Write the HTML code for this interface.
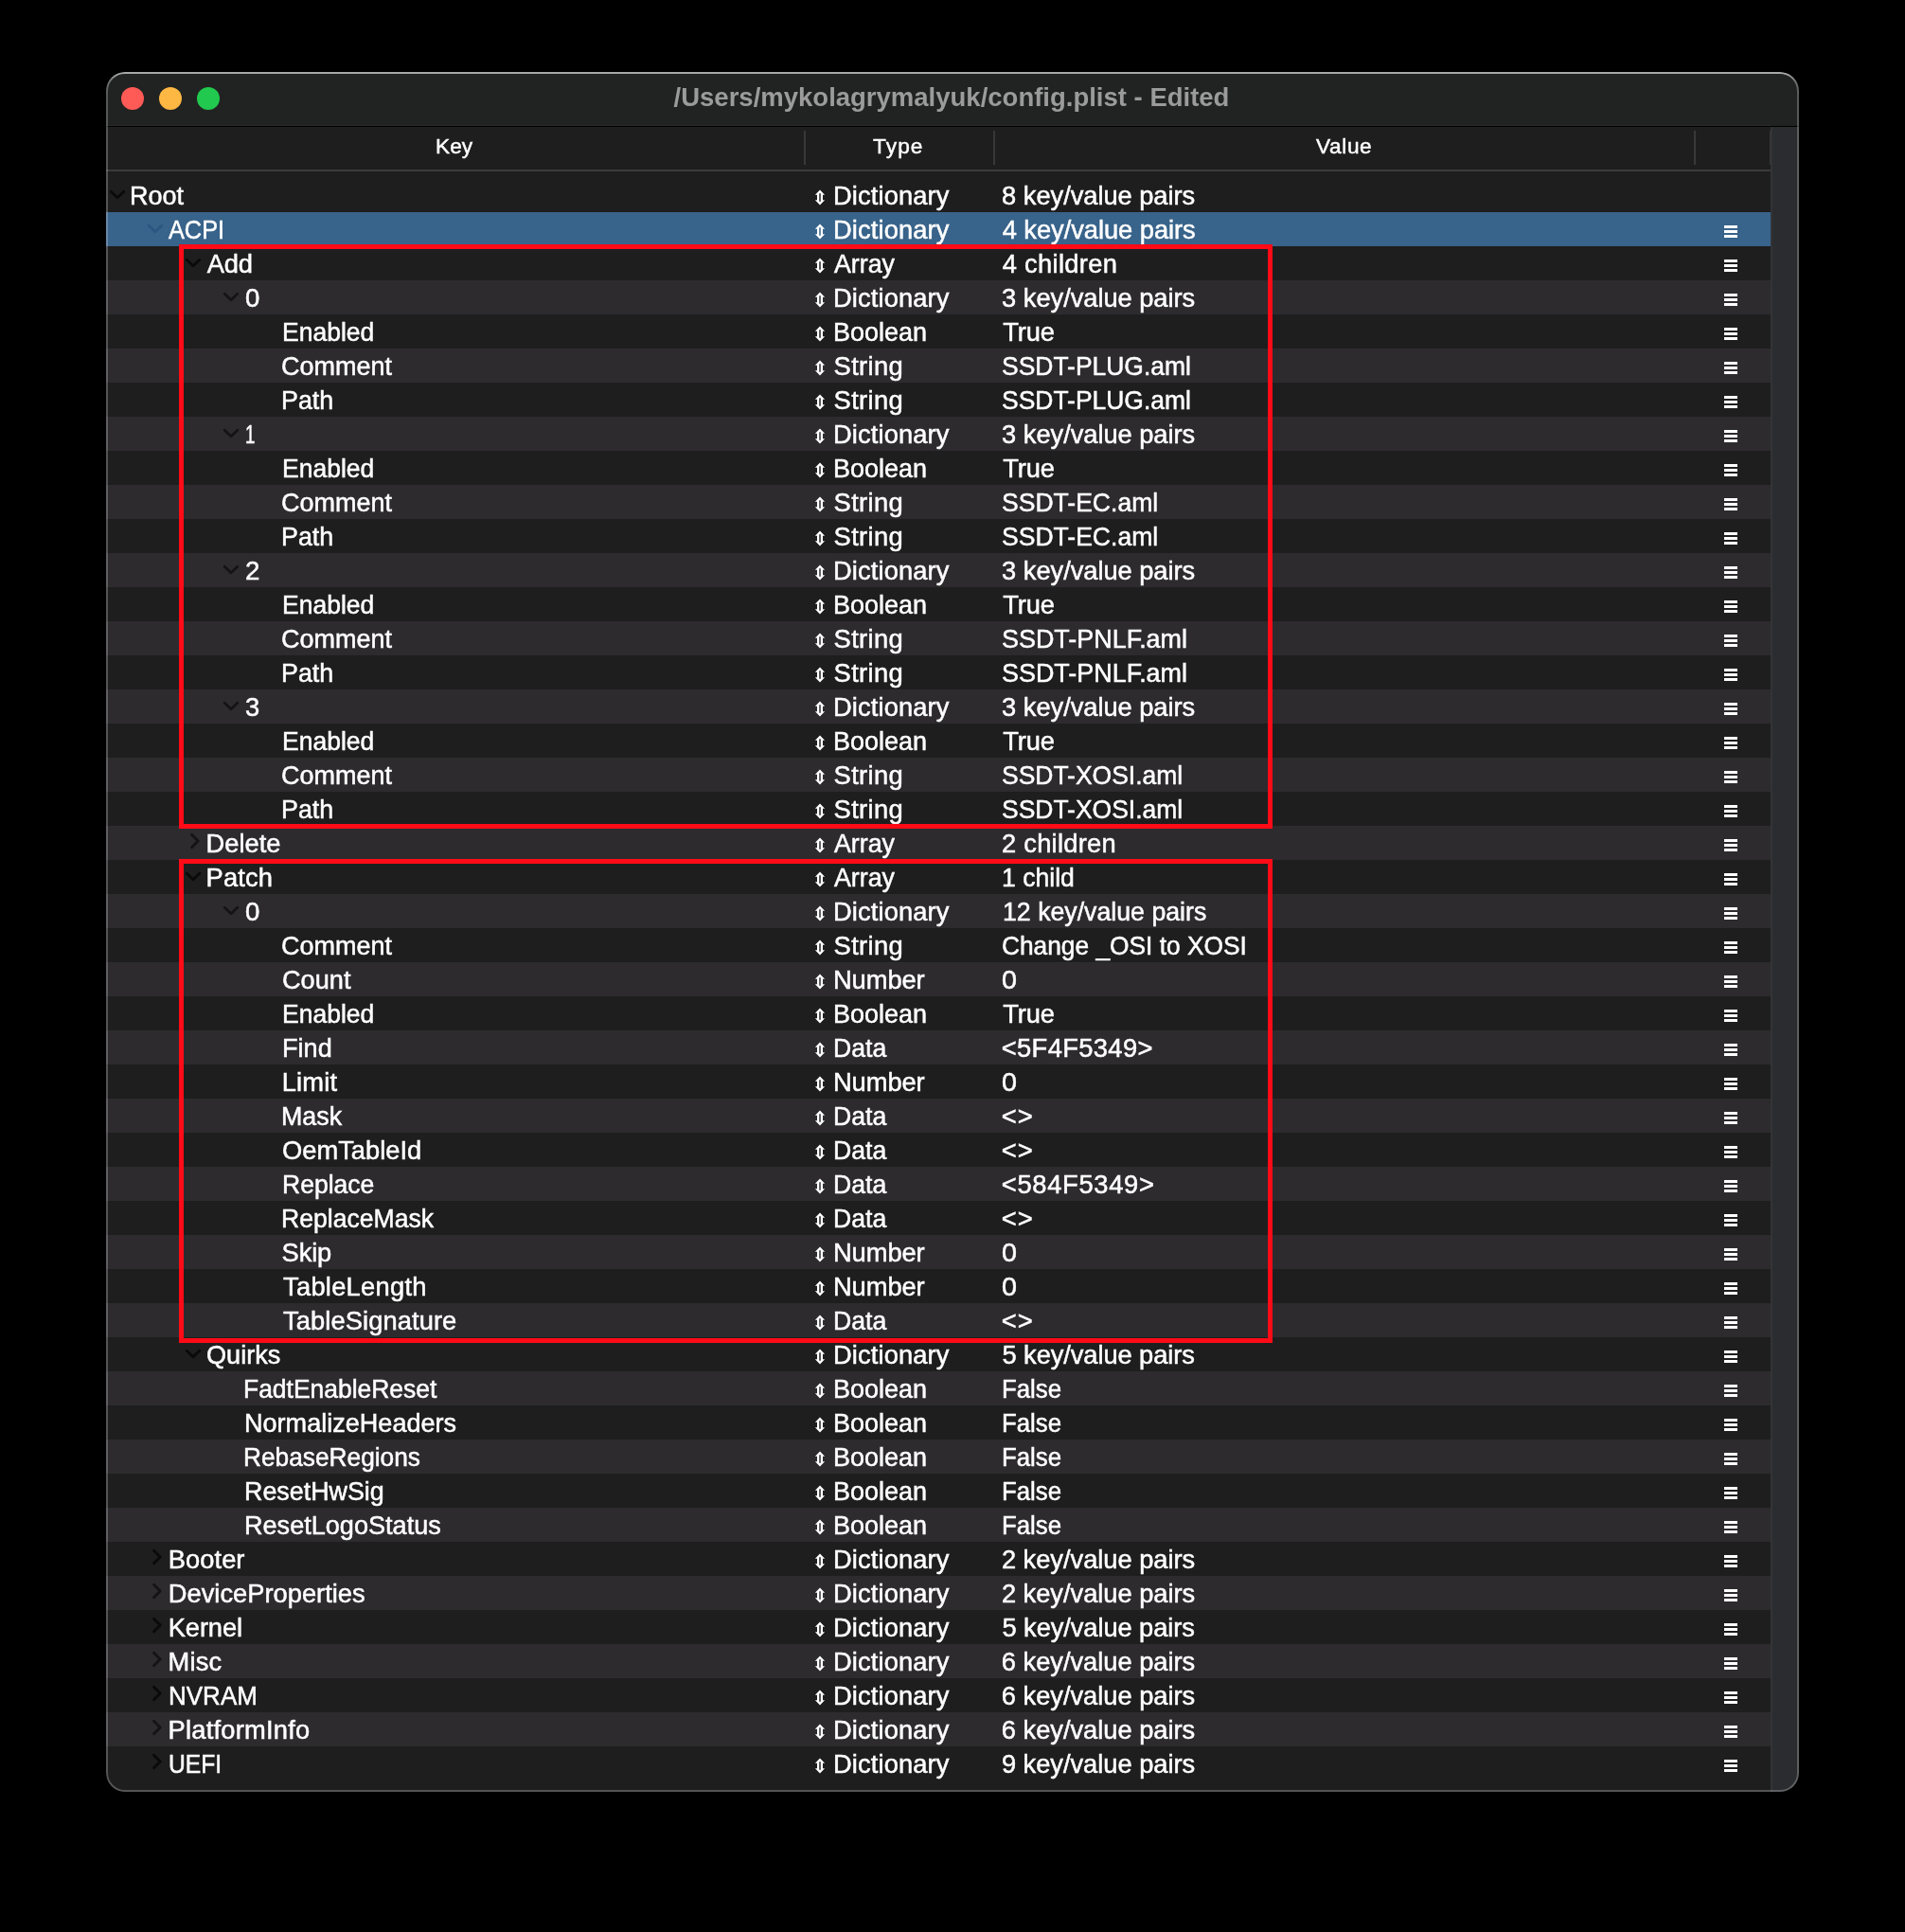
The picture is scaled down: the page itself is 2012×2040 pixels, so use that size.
<!DOCTYPE html>
<html><head><meta charset="utf-8"><title>config.plist</title>
<style>
html,body{margin:0;padding:0;background:#000;}
body{width:2012px;height:2040px;position:relative;overflow:hidden;
 font-family:"Liberation Sans",sans-serif;color:#fff;}
#win{position:absolute;left:112px;top:76px;width:1788px;height:1816px;
 border-radius:20px;background:#1e1e1e;overflow:hidden;will-change:transform;}
#tb{position:absolute;left:0;top:0;width:1788px;height:57px;background:#212322;}
#tb2{position:absolute;left:0;top:56px;width:1758px;height:1px;background:#2b2c2b;}
#tbl{position:absolute;left:0;top:57px;width:1788px;height:1px;background:#000;}
.tl{position:absolute;top:16px;width:24px;height:24px;border-radius:12px;}
#title{position:absolute;left:1px;top:0;width:1784px;height:56px;line-height:53px;text-align:center;
 font-weight:bold;font-size:27.5px;color:#9b9b9b;white-space:nowrap;}
#hdr{position:absolute;left:0;top:58px;width:1758px;height:45px;background:#1e1e1e;}
#hdrl{position:absolute;left:0;top:103px;width:1758px;height:2px;background:#3b3b3b;}
.hs{position:absolute;top:62px;width:2px;height:36px;background:#383838;}
.ht{position:absolute;top:58px;height:45px;line-height:41px;font-size:22.7px;color:#fff;white-space:nowrap;-webkit-text-stroke:0.45px #fff;}
#sb{position:absolute;left:1758px;top:58px;width:30px;height:1760px;background:#2b2c2f;box-sizing:border-box;border-left:2px solid #333437;}
#rows{position:absolute;left:0;top:112px;width:1758px;}
.r{position:absolute;left:0;width:1758px;height:36px;line-height:36px;font-size:27.3px;white-space:nowrap;-webkit-text-stroke:0.5px #fff;}
.r.o{background:#2d2b2e;}
.r.s{background:#38638a;}
.r span{position:absolute;top:1px;height:36px;}
.k{}
.t{left:770px;}
.v{left:946px;}
.ar{position:absolute;left:748px;top:12px;width:12px;height:17px;}
.cd{position:absolute;top:12px;width:18px;height:11px;}
.cr{position:absolute;top:7px;width:12px;height:18px;}
.m{position:absolute;left:1709px;top:14px;width:14px;height:13px;
 background:linear-gradient(#fff 0 3px,transparent 3px 5px,#fff 5px 8px,transparent 8px 10px,#fff 10px 13px);}
.rb{position:absolute;border:5px solid #fe0b17;box-sizing:border-box;}
#edge{position:absolute;left:0;top:0;width:1788px;height:1816px;pointer-events:none;}
</style></head>
<body>
<svg width="0" height="0" style="position:absolute"><defs><symbol id="ar" viewBox="0 0 12 17"><path fill="#fff" fill-rule="evenodd" d="M6 0.5 L11.1 5.7 L9 5.7 L9 11.3 L11.1 11.3 L6 16.5 L0.9 11.3 L3 11.3 L3 5.7 L0.9 5.7 Z M5.25 4.3 L5.25 12.7 L6.75 12.7 L6.75 4.3 Z"/></symbol><symbol id="cd" viewBox="0 0 18 11"><path fill="none" stroke="currentColor" stroke-width="2.8" stroke-linecap="round" stroke-linejoin="round" d="M2.2 2.2 L9 8.8 L15.8 2.2"/></symbol><symbol id="cr" viewBox="0 0 12 18"><path fill="none" stroke="currentColor" stroke-width="2.8" stroke-linecap="round" stroke-linejoin="round" d="M2.5 2.2 L9.2 9 L2.5 15.8"/></symbol></defs></svg>
<div id="win">
<div id="tb"></div><div id="tb2"></div><div id="tbl"></div>
<div class="tl" style="left:16px;background:#fe5a56"></div><div class="tl" style="left:56px;background:#fdb843"></div><div class="tl" style="left:96px;background:#21c94f"></div>
<div id="title">/Users/mykolagrymalyuk/config.plist - Edited</div>
<div id="hdr"></div><div id="hdrl"></div>
<div class="hs" style="left:737px"></div><div class="hs" style="left:937px"></div><div class="hs" style="left:1677px"></div><div class="hs" style="left:1757px;width:1px"></div>
<div class="ht" style="left:348px;letter-spacing:0px">Key</div><div class="ht" style="left:810px;letter-spacing:1.1px">Type</div><div class="ht" style="left:1278px;letter-spacing:0.6px">Value</div>
<div id="sb"></div>
<div id="rows">
<div class="r" style="top:0px"><svg class="cd" style="left:3px;color:#0a0a0a"><use href="#cd"/></svg><span class="k" style="left:25.32px;transform:scaleX(0.9905);transform-origin:0 0;">Root</span><svg class="ar"><use href="#ar"/></svg><span class="t" style="left:767.95px;letter-spacing:0.133px;">Dictionary</span><span class="v" style="left:946.11px;letter-spacing:-0.045px;">8 key/value pairs</span></div>
<div class="r s" style="top:36px"><svg class="cd" style="left:43px;color:#2a5680"><use href="#cd"/></svg><span class="k" style="left:66.29px;transform:scaleX(0.9264);transform-origin:0 0;">ACPI</span><svg class="ar"><use href="#ar"/></svg><span class="t" style="left:767.95px;letter-spacing:0.133px;">Dictionary</span><span class="v" style="left:946.64px;letter-spacing:-0.046px;">4 key/value pairs</span><i class="m"></i></div>
<div class="r" style="top:72px"><svg class="cd" style="left:83px;color:#0a0a0a"><use href="#cd"/></svg><span class="k" style="left:106.67px;letter-spacing:-0.098px;">Add</span><svg class="ar"><use href="#ar"/></svg><span class="t" style="left:769.36px;transform:scaleX(0.9800);transform-origin:0 0;">Array</span><span class="v" style="left:946.64px;letter-spacing:0.332px;">4 children</span><i class="m"></i></div>
<div class="r o" style="top:108px"><svg class="cd" style="left:123px;color:#141315"><use href="#cd"/></svg><span class="k" style="left:147.06px;transform:scaleX(1.0119);transform-origin:0 0;">0</span><svg class="ar"><use href="#ar"/></svg><span class="t" style="left:767.95px;letter-spacing:0.133px;">Dictionary</span><span class="v" style="left:946.11px;letter-spacing:-0.045px;">3 key/value pairs</span><i class="m"></i></div>
<div class="r" style="top:144px"><span class="k" style="left:185.51px;transform:scaleX(0.9719);transform-origin:0 0;">Enabled</span><svg class="ar"><use href="#ar"/></svg><span class="t" style="left:768.31px;transform:scaleX(0.9877);transform-origin:0 0;">Boolean</span><span class="v" style="left:947.23px;letter-spacing:-0.105px;">True</span><i class="m"></i></div>
<div class="r o" style="top:180px"><span class="k" style="left:185.31px;transform:scaleX(0.9885);transform-origin:0 0;">Comment</span><svg class="ar"><use href="#ar"/></svg><span class="t" style="left:768.58px;letter-spacing:0.349px;">String</span><span class="v" style="left:945.77px;transform:scaleX(0.9690);transform-origin:0 0;">SSDT-PLUG.aml</span><i class="m"></i></div>
<div class="r" style="top:216px"><span class="k" style="left:185.43px;transform:scaleX(0.9833);transform-origin:0 0;">Path</span><svg class="ar"><use href="#ar"/></svg><span class="t" style="left:768.58px;letter-spacing:0.349px;">String</span><span class="v" style="left:945.77px;transform:scaleX(0.9690);transform-origin:0 0;">SSDT-PLUG.aml</span><i class="m"></i></div>
<div class="r o" style="top:252px"><svg class="cd" style="left:123px;color:#141315"><use href="#cd"/></svg><span class="k" style="left:146.61px;transform:scaleX(0.6877);transform-origin:0 0;">1</span><svg class="ar"><use href="#ar"/></svg><span class="t" style="left:767.95px;letter-spacing:0.133px;">Dictionary</span><span class="v" style="left:946.11px;letter-spacing:-0.045px;">3 key/value pairs</span><i class="m"></i></div>
<div class="r" style="top:288px"><span class="k" style="left:185.51px;transform:scaleX(0.9719);transform-origin:0 0;">Enabled</span><svg class="ar"><use href="#ar"/></svg><span class="t" style="left:768.31px;transform:scaleX(0.9877);transform-origin:0 0;">Boolean</span><span class="v" style="left:947.23px;letter-spacing:-0.105px;">True</span><i class="m"></i></div>
<div class="r o" style="top:324px"><span class="k" style="left:185.31px;transform:scaleX(0.9885);transform-origin:0 0;">Comment</span><svg class="ar"><use href="#ar"/></svg><span class="t" style="left:768.58px;letter-spacing:0.349px;">String</span><span class="v" style="left:945.77px;transform:scaleX(0.9722);transform-origin:0 0;">SSDT-EC.aml</span><i class="m"></i></div>
<div class="r" style="top:360px"><span class="k" style="left:185.43px;transform:scaleX(0.9833);transform-origin:0 0;">Path</span><svg class="ar"><use href="#ar"/></svg><span class="t" style="left:768.58px;letter-spacing:0.349px;">String</span><span class="v" style="left:945.77px;transform:scaleX(0.9722);transform-origin:0 0;">SSDT-EC.aml</span><i class="m"></i></div>
<div class="r o" style="top:396px"><svg class="cd" style="left:123px;color:#141315"><use href="#cd"/></svg><span class="k" style="left:146.69px;transform:scaleX(1.0143);transform-origin:0 0;">2</span><svg class="ar"><use href="#ar"/></svg><span class="t" style="left:767.95px;letter-spacing:0.133px;">Dictionary</span><span class="v" style="left:946.11px;letter-spacing:-0.045px;">3 key/value pairs</span><i class="m"></i></div>
<div class="r" style="top:432px"><span class="k" style="left:185.51px;transform:scaleX(0.9719);transform-origin:0 0;">Enabled</span><svg class="ar"><use href="#ar"/></svg><span class="t" style="left:768.31px;transform:scaleX(0.9877);transform-origin:0 0;">Boolean</span><span class="v" style="left:947.23px;letter-spacing:-0.105px;">True</span><i class="m"></i></div>
<div class="r o" style="top:468px"><span class="k" style="left:185.31px;transform:scaleX(0.9885);transform-origin:0 0;">Comment</span><svg class="ar"><use href="#ar"/></svg><span class="t" style="left:768.58px;letter-spacing:0.349px;">String</span><span class="v" style="left:945.77px;transform:scaleX(0.9864);transform-origin:0 0;">SSDT-PNLF.aml</span><i class="m"></i></div>
<div class="r" style="top:504px"><span class="k" style="left:185.43px;transform:scaleX(0.9833);transform-origin:0 0;">Path</span><svg class="ar"><use href="#ar"/></svg><span class="t" style="left:768.58px;letter-spacing:0.349px;">String</span><span class="v" style="left:945.77px;transform:scaleX(0.9864);transform-origin:0 0;">SSDT-PNLF.aml</span><i class="m"></i></div>
<div class="r o" style="top:540px"><svg class="cd" style="left:123px;color:#141315"><use href="#cd"/></svg><span class="k" style="left:146.53px;transform:scaleX(1.0022);transform-origin:0 0;">3</span><svg class="ar"><use href="#ar"/></svg><span class="t" style="left:767.95px;letter-spacing:0.133px;">Dictionary</span><span class="v" style="left:946.11px;letter-spacing:-0.045px;">3 key/value pairs</span><i class="m"></i></div>
<div class="r" style="top:576px"><span class="k" style="left:185.51px;transform:scaleX(0.9719);transform-origin:0 0;">Enabled</span><svg class="ar"><use href="#ar"/></svg><span class="t" style="left:768.31px;transform:scaleX(0.9877);transform-origin:0 0;">Boolean</span><span class="v" style="left:947.23px;letter-spacing:-0.105px;">True</span><i class="m"></i></div>
<div class="r o" style="top:612px"><span class="k" style="left:185.31px;transform:scaleX(0.9885);transform-origin:0 0;">Comment</span><svg class="ar"><use href="#ar"/></svg><span class="t" style="left:768.58px;letter-spacing:0.349px;">String</span><span class="v" style="left:945.77px;transform:scaleX(0.9694);transform-origin:0 0;">SSDT-XOSI.aml</span><i class="m"></i></div>
<div class="r" style="top:648px"><span class="k" style="left:185.43px;transform:scaleX(0.9833);transform-origin:0 0;">Path</span><svg class="ar"><use href="#ar"/></svg><span class="t" style="left:768.58px;letter-spacing:0.349px;">String</span><span class="v" style="left:945.77px;transform:scaleX(0.9694);transform-origin:0 0;">SSDT-XOSI.aml</span><i class="m"></i></div>
<div class="r o" style="top:684px"><svg class="cr" style="left:88px;color:#141315"><use href="#cr"/></svg><span class="k" style="left:105.52px;letter-spacing:0.020px;">Delete</span><svg class="ar"><use href="#ar"/></svg><span class="t" style="left:769.36px;transform:scaleX(0.9800);transform-origin:0 0;">Array</span><span class="v" style="left:945.97px;letter-spacing:0.260px;">2 children</span><i class="m"></i></div>
<div class="r" style="top:720px"><svg class="cd" style="left:83px;color:#0a0a0a"><use href="#cd"/></svg><span class="k" style="left:105.52px;letter-spacing:0.178px;">Patch</span><svg class="ar"><use href="#ar"/></svg><span class="t" style="left:769.36px;transform:scaleX(0.9800);transform-origin:0 0;">Array</span><span class="v" style="left:945.72px;transform:scaleX(0.9740);transform-origin:0 0;">1 child</span><i class="m"></i></div>
<div class="r o" style="top:756px"><svg class="cd" style="left:123px;color:#141315"><use href="#cd"/></svg><span class="k" style="left:147.06px;transform:scaleX(1.0119);transform-origin:0 0;">0</span><svg class="ar"><use href="#ar"/></svg><span class="t" style="left:767.95px;letter-spacing:0.133px;">Dictionary</span><span class="v" style="left:946.59px;transform:scaleX(0.9785);transform-origin:0 0;">12 key/value pairs</span><i class="m"></i></div>
<div class="r" style="top:792px"><span class="k" style="left:185.31px;transform:scaleX(0.9885);transform-origin:0 0;">Comment</span><svg class="ar"><use href="#ar"/></svg><span class="t" style="left:768.58px;letter-spacing:0.349px;">String</span><span class="v" style="left:946.34px;transform:scaleX(0.9634);transform-origin:0 0;">Change _OSI to XOSI</span><i class="m"></i></div>
<div class="r o" style="top:828px"><span class="k" style="left:186.22px;transform:scaleX(0.9955);transform-origin:0 0;">Count</span><svg class="ar"><use href="#ar"/></svg><span class="t" style="left:767.96px;letter-spacing:-0.065px;">Number</span><span class="v" style="left:946.08px;transform:scaleX(1.0532);transform-origin:0 0;">0</span><i class="m"></i></div>
<div class="r" style="top:864px"><span class="k" style="left:185.51px;transform:scaleX(0.9719);transform-origin:0 0;">Enabled</span><svg class="ar"><use href="#ar"/></svg><span class="t" style="left:768.31px;transform:scaleX(0.9877);transform-origin:0 0;">Boolean</span><span class="v" style="left:947.23px;letter-spacing:-0.105px;">True</span><i class="m"></i></div>
<div class="r o" style="top:900px"><span class="k" style="left:185.56px;transform:scaleX(0.9923);transform-origin:0 0;">Find</span><svg class="ar"><use href="#ar"/></svg><span class="t" style="left:768.40px;transform:scaleX(0.9756);transform-origin:0 0;">Data</span><span class="v" style="left:945.78px;letter-spacing:0.366px;">&lt;5F4F5349&gt;</span><i class="m"></i></div>
<div class="r" style="top:936px"><span class="k" style="left:185.77px;letter-spacing:0.173px;">Limit</span><svg class="ar"><use href="#ar"/></svg><span class="t" style="left:767.96px;letter-spacing:-0.065px;">Number</span><span class="v" style="left:946.08px;transform:scaleX(1.0532);transform-origin:0 0;">0</span><i class="m"></i></div>
<div class="r o" style="top:972px"><span class="k" style="left:185.46px;transform:scaleX(0.9836);transform-origin:0 0;">Mask</span><svg class="ar"><use href="#ar"/></svg><span class="t" style="left:768.40px;transform:scaleX(0.9756);transform-origin:0 0;">Data</span><span class="v" style="left:945.78px;letter-spacing:0.960px;">&lt;&gt;</span><i class="m"></i></div>
<div class="r" style="top:1008px"><span class="k" style="left:185.95px;letter-spacing:0.013px;">OemTableId</span><svg class="ar"><use href="#ar"/></svg><span class="t" style="left:768.40px;transform:scaleX(0.9756);transform-origin:0 0;">Data</span><span class="v" style="left:945.78px;letter-spacing:0.960px;">&lt;&gt;</span><i class="m"></i></div>
<div class="r o" style="top:1044px"><span class="k" style="left:185.50px;transform:scaleX(0.9722);transform-origin:0 0;">Replace</span><svg class="ar"><use href="#ar"/></svg><span class="t" style="left:768.40px;transform:scaleX(0.9756);transform-origin:0 0;">Data</span><span class="v" style="left:945.78px;letter-spacing:0.707px;">&lt;584F5349&gt;</span><i class="m"></i></div>
<div class="r" style="top:1080px"><span class="k" style="left:185.49px;transform:scaleX(0.9741);transform-origin:0 0;">ReplaceMask</span><svg class="ar"><use href="#ar"/></svg><span class="t" style="left:768.40px;transform:scaleX(0.9756);transform-origin:0 0;">Data</span><span class="v" style="left:945.78px;letter-spacing:0.960px;">&lt;&gt;</span><i class="m"></i></div>
<div class="r o" style="top:1116px"><span class="k" style="left:185.60px;letter-spacing:-0.141px;">Skip</span><svg class="ar"><use href="#ar"/></svg><span class="t" style="left:767.96px;letter-spacing:-0.065px;">Number</span><span class="v" style="left:946.08px;transform:scaleX(1.0532);transform-origin:0 0;">0</span><i class="m"></i></div>
<div class="r" style="top:1152px"><span class="k" style="left:187.06px;letter-spacing:0.261px;">TableLength</span><svg class="ar"><use href="#ar"/></svg><span class="t" style="left:767.96px;letter-spacing:-0.065px;">Number</span><span class="v" style="left:946.08px;transform:scaleX(1.0532);transform-origin:0 0;">0</span><i class="m"></i></div>
<div class="r o" style="top:1188px"><span class="k" style="left:187.06px;letter-spacing:0.084px;">TableSignature</span><svg class="ar"><use href="#ar"/></svg><span class="t" style="left:768.40px;transform:scaleX(0.9756);transform-origin:0 0;">Data</span><span class="v" style="left:945.78px;letter-spacing:0.960px;">&lt;&gt;</span><i class="m"></i></div>
<div class="r" style="top:1224px"><svg class="cd" style="left:83px;color:#0a0a0a"><use href="#cd"/></svg><span class="k" style="left:105.69px;transform:scaleX(0.9930);transform-origin:0 0;">Quirks</span><svg class="ar"><use href="#ar"/></svg><span class="t" style="left:767.95px;letter-spacing:0.133px;">Dictionary</span><span class="v" style="left:946.52px;letter-spacing:-0.094px;">5 key/value pairs</span><i class="m"></i></div>
<div class="r o" style="top:1260px"><span class="k" style="left:144.75px;transform:scaleX(0.9687);transform-origin:0 0;">FadtEnableReset</span><svg class="ar"><use href="#ar"/></svg><span class="t" style="left:768.31px;transform:scaleX(0.9877);transform-origin:0 0;">Boolean</span><span class="v" style="left:945.74px;transform:scaleX(0.9456);transform-origin:0 0;">False</span><i class="m"></i></div>
<div class="r" style="top:1296px"><span class="k" style="left:145.62px;transform:scaleX(0.9913);transform-origin:0 0;">NormalizeHeaders</span><svg class="ar"><use href="#ar"/></svg><span class="t" style="left:768.31px;transform:scaleX(0.9877);transform-origin:0 0;">Boolean</span><span class="v" style="left:945.74px;transform:scaleX(0.9456);transform-origin:0 0;">False</span><i class="m"></i></div>
<div class="r o" style="top:1332px"><span class="k" style="left:145.44px;transform:scaleX(0.9625);transform-origin:0 0;">RebaseRegions</span><svg class="ar"><use href="#ar"/></svg><span class="t" style="left:768.31px;transform:scaleX(0.9877);transform-origin:0 0;">Boolean</span><span class="v" style="left:945.74px;transform:scaleX(0.9456);transform-origin:0 0;">False</span><i class="m"></i></div>
<div class="r" style="top:1368px"><span class="k" style="left:145.65px;transform:scaleX(0.9835);transform-origin:0 0;">ResetHwSig</span><svg class="ar"><use href="#ar"/></svg><span class="t" style="left:768.31px;transform:scaleX(0.9877);transform-origin:0 0;">Boolean</span><span class="v" style="left:945.74px;transform:scaleX(0.9456);transform-origin:0 0;">False</span><i class="m"></i></div>
<div class="r o" style="top:1404px"><span class="k" style="left:145.64px;transform:scaleX(0.9921);transform-origin:0 0;">ResetLogoStatus</span><svg class="ar"><use href="#ar"/></svg><span class="t" style="left:768.31px;transform:scaleX(0.9877);transform-origin:0 0;">Boolean</span><span class="v" style="left:945.74px;transform:scaleX(0.9456);transform-origin:0 0;">False</span><i class="m"></i></div>
<div class="r" style="top:1440px"><svg class="cr" style="left:48px;color:#0a0a0a"><use href="#cr"/></svg><span class="k" style="left:65.81px;letter-spacing:0.047px;">Booter</span><svg class="ar"><use href="#ar"/></svg><span class="t" style="left:767.95px;letter-spacing:0.133px;">Dictionary</span><span class="v" style="left:945.93px;letter-spacing:-0.036px;">2 key/value pairs</span><i class="m"></i></div>
<div class="r o" style="top:1476px"><svg class="cr" style="left:48px;color:#141315"><use href="#cr"/></svg><span class="k" style="left:65.80px;letter-spacing:0.003px;">DeviceProperties</span><svg class="ar"><use href="#ar"/></svg><span class="t" style="left:767.95px;letter-spacing:0.133px;">Dictionary</span><span class="v" style="left:945.93px;letter-spacing:-0.036px;">2 key/value pairs</span><i class="m"></i></div>
<div class="r" style="top:1512px"><svg class="cr" style="left:48px;color:#0a0a0a"><use href="#cr"/></svg><span class="k" style="left:65.81px;letter-spacing:-0.144px;">Kernel</span><svg class="ar"><use href="#ar"/></svg><span class="t" style="left:767.95px;letter-spacing:0.133px;">Dictionary</span><span class="v" style="left:946.52px;letter-spacing:-0.094px;">5 key/value pairs</span><i class="m"></i></div>
<div class="r o" style="top:1548px"><svg class="cr" style="left:48px;color:#141315"><use href="#cr"/></svg><span class="k" style="left:65.52px;letter-spacing:0.217px;">Misc</span><svg class="ar"><use href="#ar"/></svg><span class="t" style="left:767.95px;letter-spacing:0.133px;">Dictionary</span><span class="v" style="left:945.87px;letter-spacing:-0.031px;">6 key/value pairs</span><i class="m"></i></div>
<div class="r" style="top:1584px"><svg class="cr" style="left:48px;color:#0a0a0a"><use href="#cr"/></svg><span class="k" style="left:65.61px;transform:scaleX(0.9522);transform-origin:0 0;">NVRAM</span><svg class="ar"><use href="#ar"/></svg><span class="t" style="left:767.95px;letter-spacing:0.133px;">Dictionary</span><span class="v" style="left:945.87px;letter-spacing:-0.031px;">6 key/value pairs</span><i class="m"></i></div>
<div class="r o" style="top:1620px"><svg class="cr" style="left:48px;color:#141315"><use href="#cr"/></svg><span class="k" style="left:65.52px;letter-spacing:0.227px;">PlatformInfo</span><svg class="ar"><use href="#ar"/></svg><span class="t" style="left:767.95px;letter-spacing:0.133px;">Dictionary</span><span class="v" style="left:945.87px;letter-spacing:-0.031px;">6 key/value pairs</span><i class="m"></i></div>
<div class="r" style="top:1656px"><svg class="cr" style="left:48px;color:#0a0a0a"><use href="#cr"/></svg><span class="k" style="left:66.49px;transform:scaleX(0.9034);transform-origin:0 0;">UEFI</span><svg class="ar"><use href="#ar"/></svg><span class="t" style="left:767.95px;letter-spacing:0.133px;">Dictionary</span><span class="v" style="left:945.88px;letter-spacing:-0.033px;">9 key/value pairs</span><i class="m"></i></div>
</div>
<div class="rb" style="left:77px;top:182px;width:1155px;height:617px"></div>
<div class="rb" style="left:77px;top:831px;width:1155px;height:511px"></div>
<svg id="edge" width="1788" height="1816" viewBox="0 0 1788 1816"><defs><linearGradient id="eg" gradientUnits="userSpaceOnUse" x1="0" y1="0" x2="0" y2="24"><stop offset="0" stop-color="#fff" stop-opacity="0.62"/><stop offset="0.1" stop-color="#fff" stop-opacity="0.58"/><stop offset="0.4" stop-color="#fff" stop-opacity="0.36"/><stop offset="1" stop-color="#fff" stop-opacity="0.24"/></linearGradient></defs><rect x="1" y="1" width="1786" height="1814" rx="19" ry="19" fill="none" stroke="url(#eg)" stroke-width="2"/></svg>
</div>
</body></html>
